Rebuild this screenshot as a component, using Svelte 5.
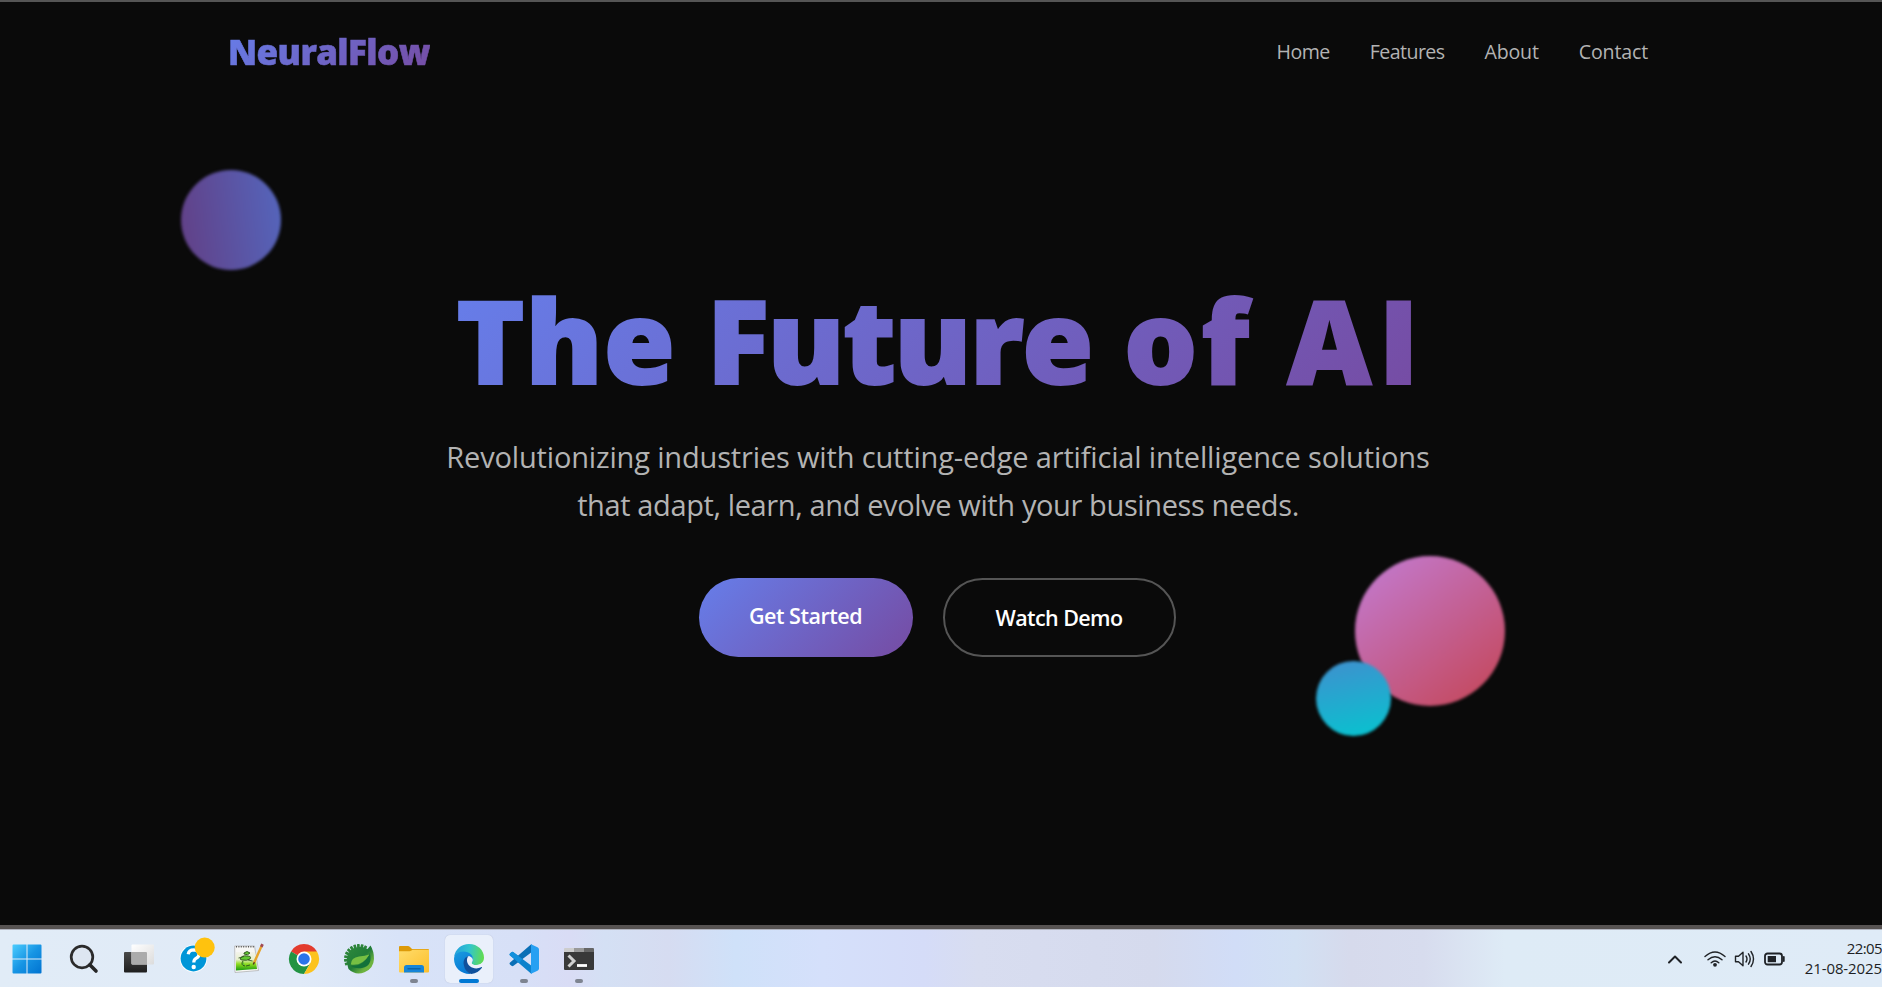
<script>
  const links = [
    { label: 'Home', track: -0.5 },
    { label: 'Features', track: -0.58 },
    { label: 'About', track: -0.2 },
    { label: 'Contact', track: -0.16 }
  ];
  const teeth = Array.from({ length: 10 }, (_, i) => 160 + i * 15.5);
</script>

<main class="page">
  <header class="bar">
    <a class="logo" href="#home">NeuralFlow</a>
    <nav>
      {#each links as l}
        <a href="#{l.label.toLowerCase()}" style:letter-spacing="{l.track}px">{l.label}</a>
      {/each}
    </nav>
  </header>

  <section class="hero">
    <h1>The <span class="w2">Future</span> <span class="w3">of</span> <span class="w4">AI</span></h1>
    <p><span class="l1">Revolutionizing industries with cutting-edge artificial intelligence solutions</span><br /><span class="l2">that adapt, learn, and evolve with your business needs.</span></p>
    <div class="actions">
      <button class="primary">Get Started</button>
      <button class="outline">Watch Demo</button>
    </div>
  </section>

  <div class="orb one"></div>
  <div class="orb two"></div>
  <div class="orb three"></div>
</main>

<footer class="taskbar">
  <div class="apps">
    <div class="app">
      <svg viewBox="0 0 30 30">
        <defs><linearGradient id="win" gradientUnits="userSpaceOnUse" x1="0" y1="0" x2="30" y2="30"><stop offset="0" stop-color="#4fcfff" /><stop offset=".5" stop-color="#1795e4" /><stop offset="1" stop-color="#0072d0" /></linearGradient></defs>
        <path fill="url(#win)" d="M1.5.5H14.5V14.5H.5V1.500Q.5.5 1.500.5ZM15.500.5H28.500Q29.500.5 29.500 1.500V14.500H15.500ZM.5 15.500H14.500V29.500H1.500Q.5 29.500.5 28.500ZM15.500 15.500H29.500V28.500Q29.500 29.500 28.500 29.500H15.500Z" />
      </svg>
    </div>
    <div class="app">
      <svg viewBox="0 0 30 30">
        <circle cx="13" cy="13" r="10.800" fill="#dde6f1" stroke="#2b2b2b" stroke-width="2.700" />
        <path d="M20.800 20.800L27 27" stroke="#262626" stroke-width="3.600" stroke-linecap="round" />
      </svg>
    </div>
    <div class="app">
      <svg viewBox="0 0 30 30">
        <defs><linearGradient id="tv" x1="0" y1="0" x2="0" y2="1"><stop offset="0" stop-color="#4a4a4a" /><stop offset="1" stop-color="#1e1e1e" /></linearGradient><linearGradient id="tw" x1="0" y1="0" x2="1" y2="1"><stop offset="0" stop-color="#fff" /><stop offset="1" stop-color="#dcdcdc" /></linearGradient></defs>
        <rect x="0" y="8" width="23" height="20.500" rx="1" fill="url(#tv)" />
        <rect x="7.500" y=".5" width="22.500" height="20" rx="1" fill="url(#tw)" />
        <path d="M7.500 8H22Q23 8 23 9V20.500H8.500Q7.500 20.500 7.500 19.500Z" fill="#ababab" />
      </svg>
    </div>
    <div class="app">
      <svg viewBox="0 0 30 30">
        <circle cx="14.500" cy="14.500" r="13.800" fill="#fff" />
        <circle cx="14.500" cy="14.500" r="12.900" fill="#0096d8" />
        <path d="M9.200 10.200Q9.800 5.800 14.800 5.800Q20 6 20 10.200Q20 12.800 17 14.400Q14.800 15.700 14.800 18.500" fill="none" stroke="#fff" stroke-width="3.200" />
        <circle cx="14.700" cy="23" r="2.200" fill="#fff" />
        <circle cx="25.700" cy="3.500" r="10" fill="#ffc20e" />
      </svg>
    </div>
    <div class="app">
      <svg viewBox="0 0 30 30">
        <defs><linearGradient id="np" x1="0" y1="0" x2="0" y2="1"><stop offset="0" stop-color="#f3f3ec" /><stop offset=".4" stop-color="#e8f0cf" /><stop offset=".65" stop-color="#8fdc1e" /><stop offset="1" stop-color="#1a9a10" /></linearGradient></defs>
        <path d="M.7 2H20.500L24.500 26.500L1 28.500Z" fill="#f7f7f5" stroke="#aaa" stroke-width=".7" />
        <path d="M2 8H21L23 25L2 26.500Z" fill="url(#np)" />
        <path d="M2 2.800H20" stroke="#555" stroke-width="1.500" stroke-dasharray="1 1.400" />
        <path d="M6 15Q8 11 13 12Q18 12 16 15Q13 17 8 16ZM9 17Q6 21 11 22M12 22L16 21M10 9Q13 6 16 9Q14 12 10 10Z" fill="#63c832" stroke="#30511e" stroke-width=".9" />
        <path d="M4.500 14L10 12.500M14 16L18.500 17" stroke="#30511e" stroke-width=".8" />
        <path d="M27.800 1.500L20 19" stroke="#e7a42c" stroke-width="2.400" />
        <path d="M28.500.2L27.300 2.800" stroke="#a04a55" stroke-width="2.800" />
        <path d="M20.400 18.200L19.300 20.500" stroke="#4a3520" stroke-width="1.500" />
      </svg>
    </div>
    <div class="app">
      <svg viewBox="0 0 30 30">
        <path d="M15 15L2 7.500A15 15 0 0 1 28 7.500Z" fill="#e33b2e" />
        <path d="M15 15L2 7.500A15 15 0 0 0 15 30L21.500 18.750Z" fill="#229342" />
        <path d="M15 7.500H28A15 15 0 0 1 15 30L21.500 18.750Z" fill="#fcc31e" />
        <circle cx="15" cy="15" r="7.500" fill="#fff" /><circle cx="15" cy="15" r="5.800" fill="#2a74ea" />
      </svg>
    </div>
    <div class="app">
      <svg viewBox="0 0 30 30">
        <defs><linearGradient id="sp" x1="0" y1="0" x2="1" y2="1"><stop offset="0" stop-color="#2f8a3c" /><stop offset=".5" stop-color="#217c38" /><stop offset=".75" stop-color="#6db33f" /></linearGradient></defs>
        {#each teeth as a}
          <rect x="25" y="13.400" width="5" height="2.700" rx=".5" fill="#2d8439" transform="rotate({a} 15 15)" />
        {/each}
        <path d="M23.500 5L26.500 1.500Q30 7 30 15A15 15 0 0 1 4.500 25Q2.500 20 3 14Q4.500 4 15 3Q20 2.500 23.500 5Z" fill="url(#sp)" />
        <path d="M25.800 9Q29 22 18 24Q12 25 7 22.300Q20 22 25.800 9Z" fill="#12713a" />
        <path d="M25.500 10.500Q21 12 15 12.500Q7 13.500 6.800 20.500Q18 22.500 25.500 10.500Z" fill="#76bf43" />
      </svg>
    </div>
    <div class="app">
      <svg viewBox="0 0 30 30">
        <defs><linearGradient id="fo" x1="0" y1="0" x2="1" y2="1"><stop offset="0" stop-color="#ffdc6b" /><stop offset="1" stop-color="#fcbf2c" /></linearGradient></defs>
        <path d="M0 3Q0 2 1 2H9Q10 2 11 3L13 5H29Q30 5 30 6V12H0Z" fill="#dd9a08" />
        <path d="M0 7.200H10.500Q11.500 7.200 12.500 6.500L13.500 5.800H30V27.500Q30 28.500 29 28.500H1Q0 28.500 0 27.500Z" fill="url(#fo)" />
        <path d="M5 28.500V23.500Q5 21 7.500 21H22.500Q25 21 25 23.500V28.500Z" fill="#1685d8" />
        <path d="M8.500 24.800H21.500" stroke="#075a9e" stroke-width="1.200" />
      </svg>
      <i></i>
    </div>
    <div class="app active">
      <svg viewBox="0 0 24 24">
        <defs>
          <linearGradient id="ea" x1="0" y1=".3" x2="1" y2=".4"><stop offset="0" stop-color="#239fdd" /><stop offset=".5" stop-color="#31c5cd" /><stop offset="1" stop-color="#62dc50" /></linearGradient>
          <linearGradient id="eb" x1="0" y1="0" x2=".5" y2="1"><stop offset="0" stop-color="#1a9ce0" /><stop offset="1" stop-color="#0878d4" /></linearGradient>
        </defs>
        <path fill="url(#ea)" d="M.1 10C1 4.300 5.900 0 12 0C19 0 24 5.100 24 10.800C24 14.700 21 16.800 17.800 16.800C15.500 16.800 14 16.100 14 15.100C14 14.500 15.300 13.900 15.300 12.100C15.300 9.900 13 8 9.200 8Z" />
        <path fill="url(#eb)" d="M0 12C0 8.500 3.500 5.900 7.500 5.900C12.500 5.900 15.300 9 15.300 12C15.300 13.500 14.700 14 14.200 14.600C14 12 13 10.200 11.700 9.600C9.500 10.300 8 13 8.400 16C9 20 10.500 22 13.500 24C6 24.500 0 19 0 12Z" />
        <path fill="#edf1fb" d="M11.900 9.800C10 11 9.300 13 9.900 15C11 18.500 14 20.200 17.200 20.200C19.500 20.200 21.200 19 22 18.700L22.200 17.600L23 14.800C21.500 16.300 19.800 16.800 17.800 16.800C15.500 16.800 14 16.100 14 15.100C14 14.700 14.700 14 15.100 13Q15 10.500 11.900 9.800Z" />
        <path fill="#10519c" d="M11.700 9.600C8.500 10.300 7.200 13.500 7.800 16.500C8.500 20.500 10.500 23 13.800 24C17.500 23.500 20.500 21.500 22.400 18.900C22.600 18.400 22.200 18.300 21.700 18.600C20.500 19.200 19.300 19.500 17.800 19.500C14 19.500 10.800 16.900 10.400 13.600C10.200 11.800 10.800 10.500 11.700 9.600Z" />
      </svg>
      <i></i>
    </div>
    <div class="app">
      <svg viewBox="0 0 30 30">
        <path d="M1.200 9.200Q0 10 .8 11.200L22.500 30V21.800L4.500 8.300Q3.500 7.500 2.500 8.200Z" fill="#0d82cc" />
        <path d="M1.200 20.800Q0 20 .8 18.800L22.500 0V8.200L4.500 21.700Q3.500 22.500 2.500 21.800Z" fill="#0a6fb6" />
        <path d="M1.200 9.200Q0 10 .8 11.200L10 19L13.500 15L4.500 8.300Q3.500 7.500 2.500 8.200Z" fill="#1390dc" />
        <path d="M22 0.200L28.500 3.200Q30 4 30 5.500V24.500Q30 26 28.500 26.800L22 29.800Z" fill="#27a0f2" />
      </svg>
      <i></i>
    </div>
    <div class="app">
      <svg viewBox="0 0 30 30">
        <path d="M0 5Q0 4 1 4H10V9H0Z" fill="#cdcdcd" /><path d="M10 4H20V9H10Z" fill="#999" /><path d="M20 4H29Q30 4 30 5V9H20Z" fill="#666" />
        <path d="M0 8H30V25Q30 26 29 26H1Q0 26 0 25Z" fill="#393939" />
        <path d="M4.500 11.500L10 17L4.500 22.500" fill="none" stroke="#d0d0d0" stroke-width="3" />
        <path d="M13 21.500H23" stroke="#fff" stroke-width="2.800" />
      </svg>
      <i></i>
    </div>
  </div>

  <div class="tray">
    <svg class="chev" viewBox="0 0 16 16"><path d="M2 11.500L8 5.500L14 11.500" /></svg>
    <svg class="wifi" viewBox="0 0 22 18"><path d="M1 6.500Q11-2.500 21 6.500M4 9.800Q11 3.500 18 9.800M7.200 12.800Q11 9.300 14.800 12.800" /><circle cx="11" cy="14.800" r="1.900" /></svg>
    <svg class="vol" viewBox="0 0 22 18"><path d="M1.500 6.200H4.500L9 2.300V15.700L4.500 11.800H1.500ZM12 6Q14 9 12 12M14.500 3.800Q18 9 14.500 14.200M17 1.500Q22 9 17 16.500" /></svg>
    <svg class="bat" viewBox="0 0 22 14"><rect x="1" y="1.500" width="17" height="11" rx="2.500" /><rect class="fill" x="3.700" y="4" width="8.300" height="6.200" /><path d="M19.800 5V9" /></svg>
    <div class="clock"><span class="time">22:05</span><span>21-08-2025</span></div>
  </div>
</footer>

<style>
  :global(body) { background: #0a0a0a; overflow: hidden; }
  .page {
    position: relative;
    box-sizing: border-box;
    height: 929px;
    padding-right: 6px;
    border-top: 2px solid #555;
    border-bottom: 4px solid #575352;
    background: #0a0a0a;
    font-family: "Open Sans", sans-serif;
    overflow: hidden;
  }
  a { text-decoration: none; color: inherit; }
  .bar {
    display: flex;
    align-items: center;
    justify-content: space-between;
    height: 54px;
    margin: 23px 228px 0 228px;
  }
  .logo {
    font-weight: 800;
    font-size: 35px;
    line-height: 54px;
    letter-spacing: -0.63px;
    background: linear-gradient(135deg, #667eea, #764ba2);
    background-clip: text;
    color: transparent;
    -webkit-text-stroke: 0.6px transparent;
  }
  nav { display: flex; gap: 40px; font-size: 19.6px; line-height: 32px; color: #b3b3b3; }
  .hero { display: flex; flex-direction: column; align-items: center; padding-top: 194px; }
  h1 {
    margin: 0 0 0 6px;
    font-weight: 800;
    font-size: 116px;
    line-height: 132px;
    white-space: nowrap;
    letter-spacing: 0.5px;
    word-spacing: 0.5px;
    background: linear-gradient(135deg, #667eea, #764ba2);
    background-clip: text;
    color: transparent;
    -webkit-text-stroke: 2px transparent;
  }
  .w2 { letter-spacing: -2.1px; }
  .w3 { letter-spacing: 3.5px; margin-left: 1px; }
  .w4 { letter-spacing: 7px; margin-left: 3.5px; }
  p { margin: 28px 0 49px; font-size: 29px; line-height: 48px; color: #b3b3b3; text-align: center; white-space: nowrap; }
  .l1 { letter-spacing: -0.16px; }
  .l2 { letter-spacing: -0.38px; }
  .actions { display: flex; gap: 30px; height: 79px; margin-right: 2px; }
  button {
    box-sizing: border-box;
    padding: 0;
    border: 0;
    border-radius: 40px;
    color: #fff;
    font: 640 21.500px/30px "Open Sans", sans-serif;
  }
  .primary { width: 214px; padding-bottom: 3px; letter-spacing: -0.48px; background: linear-gradient(135deg, #667eea, #764ba2); }
  .outline { width: 233px; letter-spacing: -0.58px; background: transparent; border: 2px solid #555; }
  .orb { position: absolute; border-radius: 50%; filter: blur(1.4px); }
  .one { left: 181px; top: 167.5px; width: 100px; height: 100px; background: linear-gradient(262deg, #5466bd, #623f85); }
  .two { left: 1355px; top: 554px; width: 150px; height: 150px; background: linear-gradient(142deg, #c278cb 8%, #c4475a 95%); }
  .three { left: 1316px; top: 659px; width: 75px; height: 75px; background: linear-gradient(168deg, #3f8fce, #06c4cf); }

  .taskbar {
    box-sizing: border-box;
    display: flex;
    justify-content: space-between;
    height: 58px;
    border-top: 1px solid #b2b5bf;
    background: linear-gradient(90deg, #e1ecf7 0, #e0eaf7 300px, #d8e3f8 400px, #d7e0f7 520px, #d9dcf5 570px, #d4e0f4 605px, #d6dcf1 668px, #cfe1f9 735px, #d5e0fb 823px, #d5dcf8 924px, #d8ddf0 978px, #d5daed 1154px, #d1ddf7 1235px, #d2e0f3 1296px, #d6daec 1350px, #d7dcee 1424px, #deebf6 1505px, #dfebf7 100%);
    font-family: "Open Sans", sans-serif;
  }
  .apps { display: flex; }
  .app { position: relative; box-sizing: border-box; width: 55px; height: 57px; padding-top: 1px; display: flex; align-items: center; justify-content: center; }
  .app:first-child { width: 56px; padding-right: 2px; }
  .app svg { width: 30px; height: 30px; overflow: visible; z-index: 1; }
  .active::before { content: ""; position: absolute; inset: 5px 3px 4px 4px; border-radius: 5px; background: #eaf0fb; box-shadow: 0 0 1px #aab3cc; }
  i { position: absolute; z-index: 1; bottom: 4px; left: 24px; width: 8px; height: 4px; border-radius: 2px; background: #7e8490; }
  .active i { left: 18px; width: 20px; background: #0078d4; }
  .tray { display: flex; align-items: center; padding-top: 1px; }
  .tray svg { fill: none; stroke: #1f2226; stroke-width: 1.400; stroke-linecap: round; stroke-linejoin: round; }
  .tray .chev { width: 16px; height: 16px; margin-right: 21px; stroke-width: 2; }
  .wifi { width: 22px; height: 18px; margin-right: 8px; }
  .wifi circle, .fill { fill: #1f2226; stroke: none; }
  .vol { width: 22px; height: 18px; margin-right: 8px; }
  .tray .bat { width: 22px; height: 14px; margin-right: 19px; stroke-width: 1.800; }
  .clock { display: flex; flex-direction: column; align-items: flex-end; padding-bottom: 3px; font-size: 15px; line-height: 20px; color: #1d1f24; letter-spacing: -0.1px; }
  .time { letter-spacing: -0.6px; }
</style>
